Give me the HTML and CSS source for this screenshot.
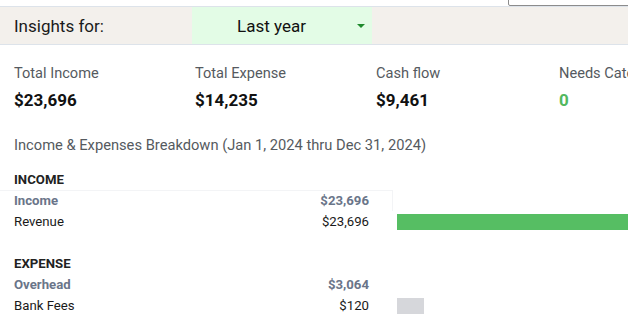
FILE: index.html
```html
<!DOCTYPE html>
<html lang="en">
<head>
  <meta charset="UTF-8">
  <title>Insights</title>
  <link rel="stylesheet" href="styles.css">
</head>
<body>
  <div class="page">
    <div class="corner-box"></div>

    <div class="insights-bar">
      <div class="insights-label">Insights for:</div>
      <div class="period-select">
        <span class="period-text">Last year</span>
        <span class="caret"></span>
      </div>
    </div>

    <div class="stats">
      <div class="stat">
        <div class="stat-label">Total Income</div>
        <div class="stat-value">$23,696</div>
      </div>
      <div class="stat">
        <div class="stat-label">Total Expense</div>
        <div class="stat-value">$14,235</div>
      </div>
      <div class="stat">
        <div class="stat-label">Cash flow</div>
        <div class="stat-value">$9,461</div>
      </div>
      <div class="stat">
        <div class="stat-label">Needs Categorization</div>
        <div class="stat-value green">0</div>
      </div>
    </div>

    <div class="breakdown-title">Income &amp; Expenses Breakdown (Jan 1, 2024 thru Dec 31, 2024)</div>

    <div class="breakdown">
      <div class="row section"><span class="name">INCOME</span></div>
      <div class="row group hovered">
        <span class="name">Income</span>
        <span class="amount">$23,696</span>
      </div>
      <div class="row">
        <span class="name">Revenue</span>
        <span class="amount">$23,696</span>
        <span class="bar-cell"><span class="bar income-bar" style="width: 320px"></span></span>
      </div>
      <div class="row spacer"></div>
      <div class="row section"><span class="name">EXPENSE</span></div>
      <div class="row group">
        <span class="name">Overhead</span>
        <span class="amount">$3,064</span>
      </div>
      <div class="row">
        <span class="name">Bank Fees</span>
        <span class="amount">$120</span>
        <span class="bar-cell"><span class="bar expense-bar" style="width: 27px"></span></span>
      </div>
    </div>
  </div>
</body>
</html>
```

FILE: styles.css
```css
body, html {
  margin: 0;
  padding: 0;
  width: 100%;
  height: 100%;
  overflow: hidden;
  background-color: #ffffff;
  font-family: Roboto, "Liberation Sans", sans-serif;
  color: #111111;
}

.page {
  position: relative;
  padding-top: 6px;
}

.corner-box {
  position: absolute;
  top: -10px;
  left: 508px;
  width: 140px;
  height: 14px;
  border: 1px solid #8c8c8c;
  border-radius: 2px;
}

.insights-bar {
  display: flex;
  align-items: stretch;
  height: 37px;
  background-color: #f3f0ec;
  border-top: 1px solid #dde3ea;
  border-bottom: 1px solid #dde3ea;
}

.insights-label {
  width: 178px;
  padding-left: 14px;
  display: flex;
  align-items: center;
  font-size: 17px;
  color: #1a1a1a;
}

.period-select {
  width: 180px;
  background-color: #e3fce6;
  display: flex;
  align-items: center;
  position: relative;
  font-size: 17px;
  color: #111;
}

.period-text {
  flex: 1;
  text-align: center;
  padding-right: 6px;
}

.caret {
  width: 0;
  height: 0;
  margin-right: 7px;
  border-left: 4px solid transparent;
  border-right: 4px solid transparent;
  border-top: 4px solid #1f8a2c;
}

.stats {
  display: grid;
  grid-template-columns: 181px 181px 183px 181px;
  padding: 20px 0 0 14px;
  white-space: nowrap;
  overflow: hidden;
}

.stat-label {
  font-size: 14.6px;
  line-height: 16px;
  color: #555a60;
}

.stat-value {
  margin-top: 9px;
  font-size: 17px;
  line-height: 20px;
  font-weight: 700;
}

.stat-value.green {
  color: #52b85e;
}

.breakdown-title {
  padding: 27px 0 0 14px;
  font-size: 14.7px;
  line-height: 16px;
  color: #555a60;
}

.breakdown {
  padding: 16px 0 0 14px;
}

.row {
  display: grid;
  grid-template-columns: 240px 115px 28px 1fr;
  height: 21px;
  align-items: center;
  font-size: 13.2px;
  color: #1a1a1a;
  white-space: nowrap;
}

.row .name {
  grid-column: 1;
}

.row .amount {
  grid-column: 2;
  text-align: right;
}

.row .bar-cell {
  grid-column: 4;
  display: flex;
  align-items: center;
}

.row.section {
  font-weight: 700;
  color: #222;
}

.row.group {
  font-weight: 700;
  color: #6a7589;
}

.row.hovered {
  margin-left: -14px;
  padding-left: 14px;
  width: 379px;
  box-shadow: inset 0 1px 0 #f3f4f6, inset -1px 0 0 #f3f4f6;
}

.bar {
  display: block;
  height: 16px;
}

.income-bar {
  background-color: #56be63;
}

.expense-bar {
  background-color: #d6d7db;
}
```
